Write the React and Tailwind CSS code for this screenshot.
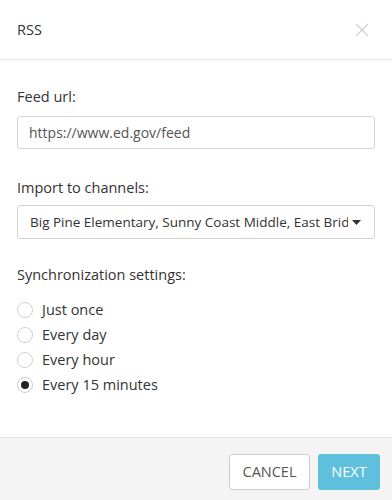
import React from "react";

function Radio({ label, checked }) {
  return (
    <label className="flex items-center h-[25px]">
      <span className="w-[16px] h-[16px] rounded-full border border-[#cfcfcf] bg-white flex items-center justify-center shrink-0">
        {checked && <span className="w-[8px] h-[8px] rounded-full bg-[#222]" />}
      </span>
      <span className="ml-[9px] text-[14.5px] text-[#333]">{label}</span>
    </label>
  );
}

export default function App() {
  return (
    <div
      className="w-[392px] h-[500px] bg-white flex flex-col text-[#333]"
      style={{ fontFamily: "'Open Sans', Lato, sans-serif" }}
    >
      <div className="h-[60px] shrink-0 border-b border-[#e5e5e5] flex items-center justify-between pl-[17px] pr-[23px]">
        <span className="text-[14.5px] text-[#333]">RSS</span>
        <svg width="14" height="14" viewBox="0 0 14 14" className="text-[#cfcfcf]">
          <path d="M1 1L13 13M13 1L1 13" stroke="currentColor" strokeWidth="1.2" fill="none" />
        </svg>
      </div>
      <div className="flex-1 px-[17px] pt-[27px]">
        <div className="text-[14.5px] leading-[20px]">Feed url:</div>
        <div className="mt-[9px] h-[33px] border border-[#d4d4d4] rounded-[3px] flex items-center pl-[11px] text-[14px] text-[#555]">
          https://www.ed.gov/feed
        </div>
        <div className="mt-[29px] text-[14.5px] leading-[20px]">Import to channels:</div>
        <div className="mt-[7px] h-[34px] border border-[#d4d4d4] rounded-[3px] flex items-center pl-[12px] pr-[13px] text-[13.5px] text-[#333]">
          <span className="flex-1 overflow-hidden whitespace-nowrap">
            Big Pine Elementary, Sunny Coast Middle, East Bridge High
          </span>
          <svg width="9" height="5" viewBox="0 0 9 5" className="ml-[4px] shrink-0">
            <path d="M0 0H9L4.5 5Z" fill="#333" />
          </svg>
        </div>
        <div className="mt-[26px] text-[14.5px] leading-[20px]">Synchronization settings:</div>
        <div className="mt-[12px] flex flex-col">
          <Radio label="Just once" />
          <Radio label="Every day" />
          <Radio label="Every hour" />
          <Radio label="Every 15 minutes" checked />
        </div>
      </div>
      <div className="h-[63px] shrink-0 border-t border-[#e5e5e5] bg-[#f4f4f4] flex items-start justify-end pt-[16px] pr-[12px] gap-[8px]">
        <button className="h-[36px] w-[81px] border border-[#cccccc] rounded-[3px] bg-white text-[14.5px] text-[#555] uppercase">
          Cancel
        </button>
        <button className="h-[36px] w-[62px] rounded-[3px] bg-[#5fbfdd] text-[14.5px] text-white uppercase">
          Next
        </button>
      </div>
    </div>
  );
}
